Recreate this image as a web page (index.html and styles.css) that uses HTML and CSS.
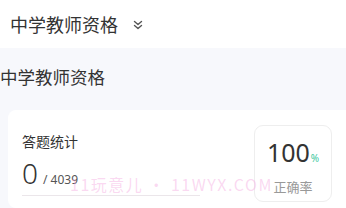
FILE: index.html
```html
<!DOCTYPE html>
<html lang="zh">
<head>
<meta charset="utf-8">
<link rel="stylesheet" href="styles.css">
</head>
<body>
<header class="topbar">
  <span class="topbar-title">中学教师资格</span>
  <svg class="chev" width="10" height="10" viewBox="0 0 10 10"><path d="M1.5 1.5 L5 4.5 L8.5 1.5 M1.5 5.5 L5 8.5 L8.5 5.5" fill="none" stroke="#555" stroke-width="1.4" stroke-linecap="round" stroke-linejoin="round"/></svg>
</header>
<main class="content">
  <h2 class="section-title">中学教师资格</h2>
  <section class="card">
    <div class="stats">
      <div class="stats-label">答题统计</div>
      <div class="stats-row">
        <span class="stats-num">0</span>
        <span class="stats-total">/ 4039</span>
      </div>
    </div>
    <div class="rate">
      <div class="rate-val">100<span class="pct">%</span></div>
      <div class="rate-label">正确率</div>
    </div>
  </section>
  <div class="watermark">11玩意儿 • 11WYX.COM</div>
</main>
</body>
</html>
```

FILE: styles.css
```css
* { box-sizing: border-box; }
html, body { margin: 0; padding: 0; }
body {
  width: 346px;
  height: 208px;
  overflow: hidden;
  background: #f7f8fc;
  font-family: "Noto Sans CJK SC", "Noto Sans", sans-serif;
  color: #333;
}
.topbar {
  height: 48px;
  background: #fff;
  display: flex;
  align-items: center;
  padding-left: 10px;
}
.topbar-title {
  font-size: 18px;
  line-height: 24px;
  color: #333;
}
.chev { margin-left: 15px; margin-top: 1px; }
.content { position: relative; padding-top: 17px; }
.section-title {
  margin: 0;
  font-size: 17.5px;
  line-height: 24px;
  font-weight: 400;
  color: #333;
}
.card {
  margin: 21px 0 0 8px;
  background: #fff;
  border-radius: 8px 0 0 8px;
  height: 98px;
  display: flex;
  align-items: flex-start;
  padding: 15px 14px 0 14px;
}
.stats {
  width: 178px;
  padding-top: 6px;
  border-bottom: 1px solid #ebe6ea;
  padding-bottom: 4px;
}
.stats-label {
  font-size: 14px;
  line-height: 20px;
  color: #333;
}
.stats-row {
  display: flex;
  align-items: baseline;
  margin-top: 4px;
}
.stats-num {
  font-family: "Noto Sans", sans-serif;
  font-weight: 300;
  font-size: 28px;
  line-height: 36px;
  color: #333;
}
.stats-total {
  font-family: "Noto Sans", sans-serif;
  font-size: 12px;
  margin-left: 5px;
  color: #555;
}
.rate {
  margin-left: auto;
  width: 78px;
  height: 77px;
  border: 1px solid #eeeeee;
  border-radius: 9px;
  display: flex;
  flex-direction: column;
  align-items: center;
  padding-top: 10px;
}
.rate-val {
  font-family: "Noto Sans", sans-serif;
  font-size: 25px;
  line-height: 32px;
  color: #333;
}
.pct {
  font-size: 10px;
  color: #3cc8a0;
  margin-left: 1px;
}
.rate-label {
  font-size: 13px;
  line-height: 18px;
  color: #999;
  margin-top: 4px;
}
.watermark {
  position: absolute;
  left: 70px;
  top: 126px;
  font-family: "Noto Sans CJK SC", sans-serif;
  font-size: 16px;
  line-height: 20px;
  letter-spacing: 1.5px;
  color: rgba(245, 170, 225, 0.45);
  white-space: nowrap;
}
```
